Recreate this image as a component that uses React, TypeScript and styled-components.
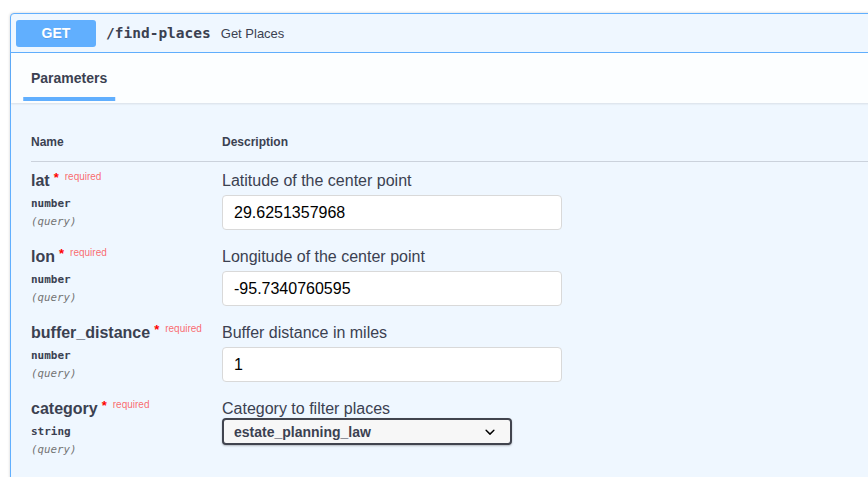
import React from "react";
import styled, { createGlobalStyle } from "styled-components";

const Global = createGlobalStyle`
  html, body {
    margin: 0;
    padding: 0;
    background: #ffffff;
    overflow: hidden;
    font-family: "Liberation Sans", Arial, sans-serif;
    color: #3b4151;
  }
  * { box-sizing: border-box; }
`;

const Page = styled.div`
  padding: 13px 0 0 10px;
  width: 1100px;
`;

const OpBlock = styled.div`
  width: 1000px;
  border: 1px solid #61affe;
  border-radius: 4px;
  background: #eff7ff;
  box-shadow: 0 0 3px rgba(0, 0, 0, 0.19);
  min-height: 480px;
`;

const Summary = styled.div`
  display: flex;
  align-items: center;
  padding: 5px;
  height: 39px;
  border-bottom: 1px solid #61affe;
`;

const Method = styled.span`
  display: inline-flex;
  align-items: center;
  justify-content: center;
  width: 80px;
  height: 27px;
  border-radius: 3px;
  background: #61affe;
  color: #ffffff;
  font-size: 14px;
  font-weight: 700;
  text-shadow: 0 1px 0 rgba(0, 0, 0, 0.1);
`;

const Path = styled.span`
  font-family: "DejaVu Sans Mono", "Liberation Mono", monospace;
  font-size: 14.5px;
  font-weight: 700;
  padding: 0 10px;
  color: #3b4151;
`;

const SummaryDesc = styled.span`
  font-size: 13px;
  color: #3b4151;
`;

const SectionHeader = styled.div`
  display: flex;
  align-items: flex-start;
  height: 50px;
  padding: 16px 20px 0;
  background: rgba(255, 255, 255, 0.8);
  box-shadow: 0 1px 2px rgba(0, 0, 0, 0.1);
`;

const Tab = styled.span`
  position: relative;
  font-size: 14px;
  font-weight: 700;
  line-height: 18px;
  color: #3b4151;

  &::after {
    content: "";
    position: absolute;
    top: 28px;
    left: 50%;
    width: 120%;
    height: 4px;
    transform: translateX(-50%);
    background: #61affe;
  }
`;

const TableWrap = styled.div`
  padding: 20px;
`;

const Table = styled.div`
  display: grid;
  grid-template-columns: 191px 1fr;
`;

const Th = styled.div`
  font-size: 12px;
  font-weight: 700;
  line-height: 14px;
  padding: 12px 0;
  border-bottom: 1px solid rgba(59, 65, 81, 0.2);
  color: #3b4151;
`;

const NameCell = styled.div`
  padding: 10px 0 7px;
`;

const DescCell = styled.div`
  padding: 10px 0 7px;
`;

const ParamName = styled.div`
  font-size: 16px;
  font-weight: 700;
  line-height: 18px;
  color: #3b4151;
  white-space: nowrap;
`;

const Star = styled.span`
  color: #ff0000;
  font-size: 13px;
  position: relative;
  top: -4px;
  margin-left: 4px;
`;

const Required = styled.span`
  color: rgba(255, 0, 0, 0.6);
  font-size: 10px;
  font-weight: 400;
  position: relative;
  top: -6px;
  padding-left: 6px;
`;

const ParamType = styled.div`
  font-family: "DejaVu Sans Mono", "Liberation Mono", monospace;
  font-size: 11px;
  font-weight: 700;
  line-height: 18px;
  margin-top: 3px;
  color: #3b4151;
`;

const ParamIn = styled.div`
  font-family: "DejaVu Sans Mono", "Liberation Mono", monospace;
  font-size: 10.8px;
  font-style: italic;
  font-weight: 400;
  line-height: 18px;
  color: #747474;
`;

const Desc = styled.div`
  font-size: 16px;
  line-height: 18px;
  color: #3b4151;
`;

const Input = styled.input`
  display: block;
  width: 340px;
  height: 35px;
  margin: 5px 0 0;
  padding: 0 10px 0 11px;
  border: 1px solid #d9d9d9;
  border-radius: 4px;
  background: #ffffff;
  font-family: "Liberation Sans", Arial, sans-serif;
  font-size: 16px;
  color: #000000;
  outline: none;
`;

const SelectWrap = styled.div`
  position: relative;
  width: 290px;
  height: 27px;
`;

const Select = styled.select`
  appearance: none;
  width: 100%;
  height: 100%;
  padding: 0 40px 0 10px;
  border: 2px solid #41444e;
  border-radius: 4px;
  background: #f7f7f7;
  box-shadow: 0 1px 2px 0 rgba(0, 0, 0, 0.25);
  font-family: "Liberation Sans", Arial, sans-serif;
  font-size: 14px;
  font-weight: 700;
  color: #3b4151;
  outline: none;
`;

const Chevron = styled.svg`
  position: absolute;
  right: 12px;
  top: 50%;
  transform: translateY(-50%);
  width: 20px;
  height: 20px;
  pointer-events: none;
`;

type Param = {
  name: string;
  type: string;
  desc: string;
  value: string;
  select?: boolean;
};

const params: Param[] = [
  { name: "lat", type: "number", desc: "Latitude of the center point", value: "29.6251357968" },
  { name: "lon", type: "number", desc: "Longitude of the center point", value: "-95.7340760595" },
  { name: "buffer_distance", type: "number", desc: "Buffer distance in miles", value: "1" },
  { name: "category", type: "string", desc: "Category to filter places", value: "estate_planning_law", select: true },
];

export default function App() {
  return (
    <>
      <Global />
      <Page>
        <OpBlock>
          <Summary>
            <Method>GET</Method>
            <Path>/find-places</Path>
            <SummaryDesc>Get Places</SummaryDesc>
          </Summary>
          <SectionHeader>
            <Tab>Parameters</Tab>
          </SectionHeader>
          <TableWrap>
            <Table>
              <Th>Name</Th>
              <Th>Description</Th>
              {params.map((p) => (
                <React.Fragment key={p.name}>
                  <NameCell>
                    <ParamName>
                      {p.name}
                      <Star>*</Star>
                      <Required>required</Required>
                    </ParamName>
                    <ParamType>{p.type}</ParamType>
                    <ParamIn>(query)</ParamIn>
                  </NameCell>
                  <DescCell>
                    <Desc>{p.desc}</Desc>
                    {p.select ? (
                      <SelectWrap>
                        <Select defaultValue={p.value}>
                          <option value={p.value}>{p.value}</option>
                        </Select>
                        <Chevron viewBox="0 0 20 20">
                          <path
                            fill="#000"
                            d="M13.418 7.859a.695.695 0 01.978 0 .68.68 0 010 .969l-3.908 3.83a.697.697 0 01-.979 0l-3.908-3.83a.68.68 0 010-.969.695.695 0 01.978 0L10 11l3.418-3.141z"
                          />
                        </Chevron>
                      </SelectWrap>
                    ) : (
                      <Input defaultValue={p.value} />
                    )}
                  </DescCell>
                </React.Fragment>
              ))}
            </Table>
          </TableWrap>
        </OpBlock>
      </Page>
    </>
  );
}
